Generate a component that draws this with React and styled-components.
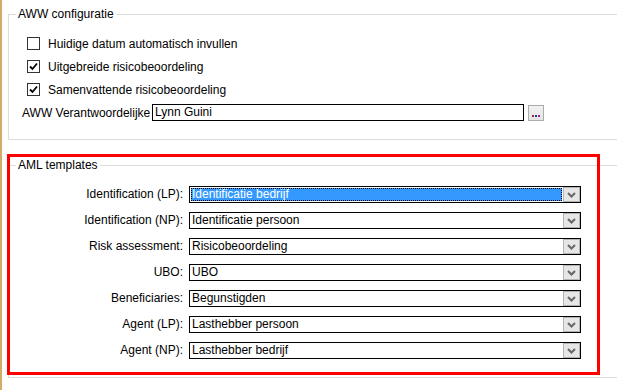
import React from "react";
import styled, { createGlobalStyle } from "styled-components";

const Global = createGlobalStyle`
  html, body {
    margin: 0;
    padding: 0;
    background: #ffffff;
    overflow: hidden;
  }
  body {
    font-family: "Liberation Sans", Arial, sans-serif;
    font-size: 12px;
    color: #000;
  }
`;

const Page = styled.div`
  width: 617px;
  height: 390px;
  box-sizing: border-box;
  border-left: 2px solid #d3ad68;
  padding-left: 6px;
  padding-top: 7px;
  overflow: hidden;
`;

const Group = styled.fieldset`
  margin: 0;
  padding: 0;
  border: 1px solid #dcdcdc;
  border-right: none;
  min-width: 0;
  width: 640px;
  box-sizing: border-box;
  legend {
    margin-left: 7px;
    padding: 0 2px;
    line-height: 14px;
    font-size: 12px;
  }
`;

const AwwBody = styled.div`
  padding: 11px 0 18px 0;
`;

const CheckRow = styled.label`
  display: flex;
  align-items: center;
  height: 23px;
  padding-left: 18px;
  gap: 8px;
  line-height: 14px;
`;

const Box = styled.span`
  width: 13px;
  height: 13px;
  box-sizing: border-box;
  border: 1px solid #333;
  background: #fff;
  display: flex;
  align-items: center;
  justify-content: center;
`;

const FieldRow = styled.div`
  display: flex;
  align-items: center;
  margin-top: 3px;
  padding-left: 13px;
  height: 17px;
`;

const FieldLabel = styled.span`
  width: 130px;
  line-height: 14px;
`;

const TextBox = styled.div`
  width: 372px;
  height: 17px;
  box-sizing: border-box;
  border: 1px solid #000;
  padding-left: 2px;
  line-height: 15px;
`;

const DotsButton = styled.div`
  width: 16px;
  height: 16px;
  margin-left: 4px;
  margin-top: 1px;
  box-sizing: border-box;
  border: 1px solid #acacac;
  background: linear-gradient(#f2f2f2, #e4e4e4);
  display: flex;
  align-items: flex-end;
  justify-content: center;
  padding-bottom: 3px;
  gap: 1px;
`;

const Dot = styled.span`
  width: 2px;
  height: 2px;
  background: ${(p) => p.c};
`;

const Highlight = styled.div`
  position: relative;
  margin-top: 18px;
`;

const RedFrame = styled.div`
  position: absolute;
  left: -1px;
  top: -4px;
  width: 593px;
  height: 221px;
  box-sizing: border-box;
  border: 3px solid #ff0000;
  pointer-events: none;
`;

const TemplateGrid = styled.div`
  display: grid;
  grid-template-columns: 174px 392px;
  column-gap: 6px;
  row-gap: 9px;
  padding: 14px 0 18px 0;
`;

const RowLabel = styled.div`
  text-align: right;
  height: 17px;
  line-height: 17px;
`;

const Combo = styled.div`
  height: 17px;
  box-sizing: border-box;
  border: 1px solid #000;
  display: flex;
  align-items: stretch;
  background: #fff;
`;

const ComboText = styled.div`
  flex: 1;
  line-height: 13px;
  margin: 1px;
  padding-left: 1px;
  box-sizing: border-box;
  background: ${(p) => (p.selected ? "#3399ff" : "transparent")};
  color: ${(p) => (p.selected ? "#fff" : "#000")};
  outline: ${(p) => (p.selected ? "1px dotted #000" : "none")};
  outline-offset: -1px;
`;

const Arrow = styled.div`
  width: 17px;
  box-sizing: border-box;
  border: 1px solid #b5b5b5;
  background: #e6e6e6;
  display: flex;
  align-items: center;
  justify-content: center;
`;

function Check({ checked }) {
  return (
    <Box>
      {checked && (
        <svg width="9" height="9" viewBox="0 0 9 9">
          <path d="M1 4.5 L3.5 7 L8 1.5" stroke="#000" strokeWidth="1.8" fill="none" />
        </svg>
      )}
    </Box>
  );
}

const templates = [
  ["Identification (LP):", "Identificatie bedrijf"],
  ["Identification (NP):", "Identificatie persoon"],
  ["Risk assessment:", "Risicobeoordeling"],
  ["UBO:", "UBO"],
  ["Beneficiaries:", "Begunstigden"],
  ["Agent (LP):", "Lasthebber persoon"],
  ["Agent (NP):", "Lasthebber bedrijf"],
];

export default function App() {
  return (
    <>
      <Global />
      <Page>
        <Group>
          <legend>AWW configuratie</legend>
          <AwwBody>
            <CheckRow>
              <Check />
              Huidige datum automatisch invullen
            </CheckRow>
            <CheckRow>
              <Check checked />
              Uitgebreide risicobeoordeling
            </CheckRow>
            <CheckRow>
              <Check checked />
              Samenvattende risicobeoordeling
            </CheckRow>
            <FieldRow>
              <FieldLabel>AWW Verantwoordelijke</FieldLabel>
              <TextBox>Lynn Guini</TextBox>
              <DotsButton>
                <Dot c="#9a2b2b" />
                <Dot c="#2b3a9a" />
                <Dot c="#8a2b8a" />
              </DotsButton>
            </FieldRow>
          </AwwBody>
        </Group>
        <Highlight>
          <Group>
            <legend>AML templates</legend>
            <TemplateGrid>
              {templates.map(([label, value], i) => (
                <React.Fragment key={label}>
                  <RowLabel>{label}</RowLabel>
                  <Combo>
                    <ComboText selected={i === 0}>{value}</ComboText>
                    <Arrow>
                      <svg width="9" height="6" viewBox="0 0 9 6">
                        <path d="M1 1 L4.5 4.5 L8 1" stroke="#666" strokeWidth="2" fill="none" />
                      </svg>
                    </Arrow>
                  </Combo>
                </React.Fragment>
              ))}
            </TemplateGrid>
          </Group>
          <RedFrame />
        </Highlight>
      </Page>
    </>
  );
}
